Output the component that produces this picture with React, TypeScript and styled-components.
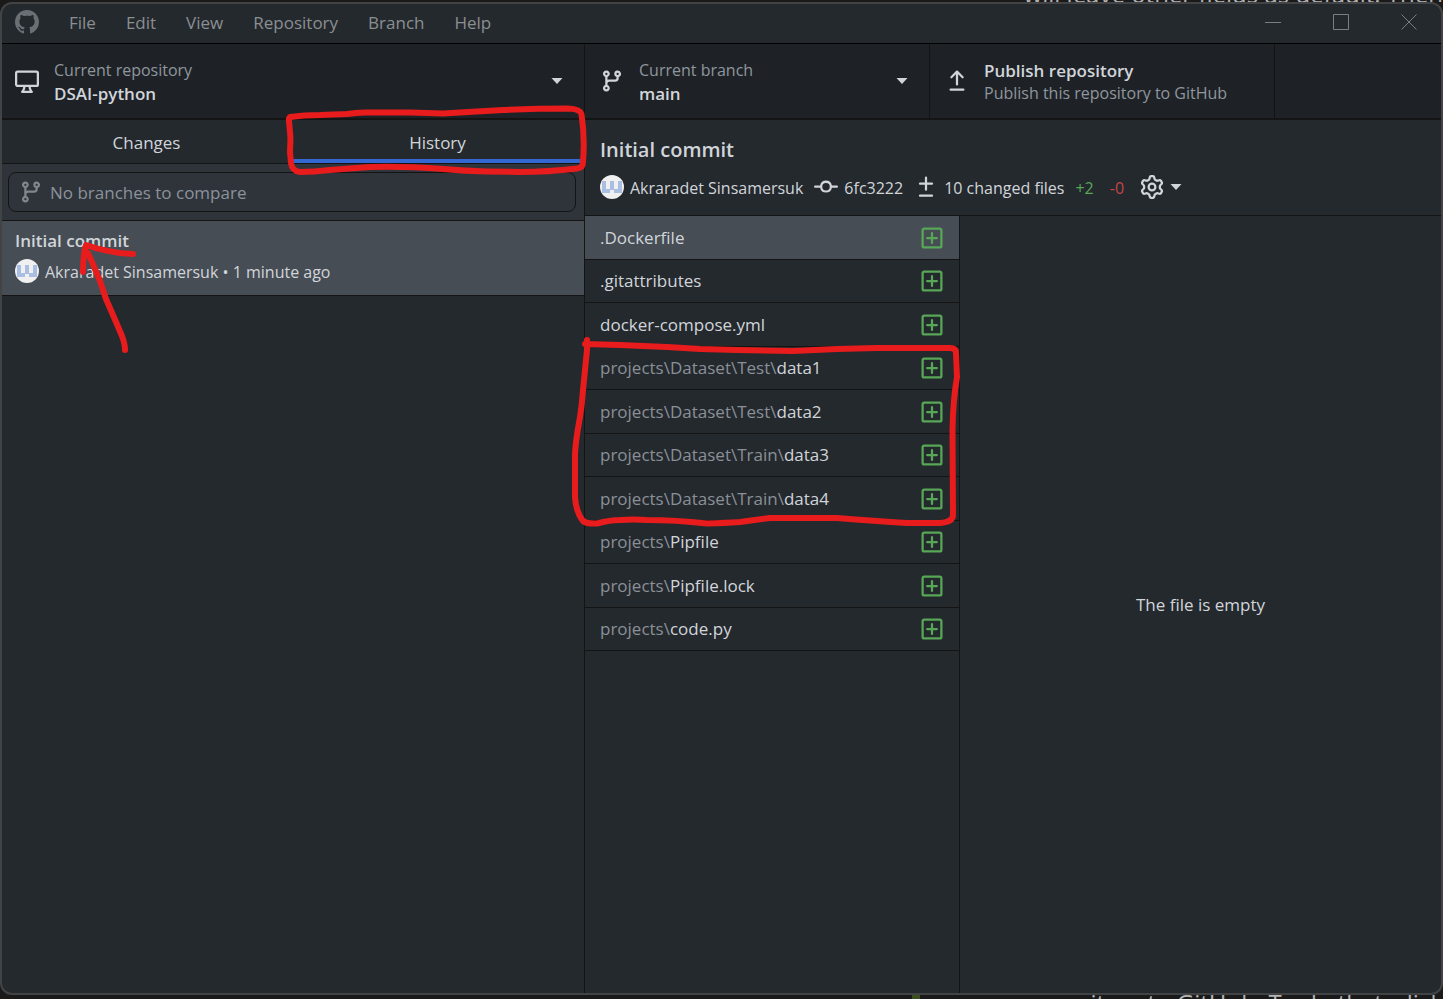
import React from 'react';
import styled, { createGlobalStyle, css } from 'styled-components';

const GlobalStyle = createGlobalStyle`
  *, *::before, *::after { box-sizing: border-box; }
  body {
    margin: 0;
    background: #1b1a1b;
    color: #d1d5da;
    font-family: "Open Sans", "Noto Sans", sans-serif;
    font-size: 17px;
    line-height: 24px;
  }
  button, input { font: inherit; color: inherit; }
  button { background: none; border: 0; padding: 0; text-align: left; cursor: default; }
  ul { list-style: none; margin: 0; padding: 0; }
  h1, h2, p { margin: 0; }
`;

const line = '#141414';

/* Octicon outlines on a 16-unit grid */
const icons = {
  github:
    'M8 0C3.58 0 0 3.58 0 8c0 3.54 2.29 6.53 5.47 7.59.4.07.55-.17.55-.38 0-.19-.01-.82-.01-1.49-2.01.37-2.53-.49-2.69-.94-.09-.23-.48-.94-.82-1.13-.28-.15-.68-.52-.01-.53.63-.01 1.08.58 1.23.82.72 1.21 1.87.87 2.33.66.07-.52.28-.87.51-1.07-1.78-.2-3.64-.89-3.64-3.95 0-.87.31-1.59.82-2.15-.08-.2-.36-1.02.08-2.12 0 0 .67-.21 2.2.82.64-.18 1.32-.27 2-.27.68 0 1.36.09 2 .27 1.53-1.04 2.2-.82 2.2-.82.44 1.1.16 1.92.08 2.12.51.56.82 1.27.82 2.15 0 3.07-1.87 3.75-3.65 3.95.29.25.54.73.54 1.48 0 1.07-.01 1.93-.01 2.2 0 .21.15.46.55.38A8.013 8.013 0 0016 8c0-4.42-3.58-8-8-8z',
  desktop:
    'M1.75 2.5h12.5a.25.25 0 01.25.25v7.5a.25.25 0 01-.25.25H1.75a.25.25 0 01-.25-.25v-7.5a.25.25 0 01.25-.25zM14.25 1H1.75A1.75 1.75 0 000 2.75v7.5C0 11.216.784 12 1.75 12h3.727c-.1 1.041-.52 1.872-1.292 2.757A.75.75 0 004.75 16h6.5a.75.75 0 00.565-1.243c-.772-.885-1.193-1.716-1.292-2.757h3.727A1.75 1.75 0 0016 10.25v-7.5A1.75 1.75 0 0014.25 1zM9.018 12H6.982a5.72 5.72 0 01-.765 2.5h3.566a5.72 5.72 0 01-.765-2.5z',
  branch:
    'M11.75 2.5a.75.75 0 100 1.5.75.75 0 000-1.5zm-2.25.75a2.25 2.25 0 113 2.122V6A2.5 2.5 0 0110 8.5H6a1 1 0 00-1 1v1.128a2.251 2.251 0 11-1.5 0V5.372a2.25 2.25 0 111.5 0v1.836A2.492 2.492 0 016 7h4a1 1 0 001-1v-.628A2.25 2.25 0 019.5 3.25zM4.25 12a.75.75 0 100 1.5.75.75 0 000-1.5zM3.5 3.25a.75.75 0 111.5 0 .75.75 0 01-1.5 0z',
  upload:
    'M8.53 1.22a.75.75 0 00-1.06 0L3.72 4.97a.75.75 0 001.06 1.06l2.47-2.47v6.69a.75.75 0 001.5 0V3.56l2.47 2.47a.75.75 0 101.06-1.06L8.53 1.22zM3.75 13a.75.75 0 000 1.5h8.5a.75.75 0 000-1.5h-8.5z',
  commit:
    'M10.5 7.75a2.5 2.5 0 11-5 0 2.5 2.5 0 015 0zm1.43.75a4.002 4.002 0 01-7.86 0H.75a.75.75 0 110-1.5h3.32a4.001 4.001 0 017.86 0h3.32a.75.75 0 110 1.5h-3.32z',
  diff: 'M8.75 1.75a.75.75 0 00-1.5 0V5H4a.75.75 0 000 1.5h3.25v3.25a.75.75 0 001.5 0V6.5H12A.75.75 0 0012 5H8.75V1.75zM4 13a.75.75 0 000 1.5h8a.75.75 0 100-1.5H4z',
  added:
    'M13.25 2.5H2.75a.25.25 0 00-.25.25v10.5c0 .138.112.25.25.25h10.5a.25.25 0 00.25-.25V2.75a.25.25 0 00-.25-.25zM2.75 1h10.5c.966 0 1.75.784 1.75 1.75v10.5A1.75 1.75 0 0113.25 15H2.75A1.75 1.75 0 011 13.25V2.75C1 1.784 1.784 1 2.75 1zM8 4a.75.75 0 01.75.75v2.5h2.5a.75.75 0 010 1.5h-2.5v2.5a.75.75 0 01-1.5 0v-2.5h-2.5a.75.75 0 010-1.5h2.5v-2.5A.75.75 0 018 4z',
  gear: 'M7.429 1.525a6.593 6.593 0 011.142 0c.036.003.108.036.137.146l.289 1.105c.147.56.55.967.997 1.189.174.086.341.183.501.29.417.278.97.423 1.53.27l1.102-.303c.11-.03.175.016.195.046.219.31.41.641.573.989.014.031.022.11-.059.19l-.815.806c-.411.406-.562.957-.53 1.456a4.588 4.588 0 010 .582c-.032.499.119 1.05.53 1.456l.815.806c.08.08.073.159.059.19a6.494 6.494 0 01-.573.99c-.02.029-.086.074-.195.045l-1.103-.303c-.559-.153-1.112-.008-1.529.27-.16.107-.327.204-.5.29-.449.222-.851.628-.998 1.189l-.289 1.105c-.029.11-.101.143-.137.146a6.613 6.613 0 01-1.142 0c-.036-.003-.108-.037-.137-.146l-.289-1.105c-.147-.56-.55-.967-.997-1.189a4.502 4.502 0 01-.501-.29c-.417-.278-.97-.423-1.53-.27l-1.102.303c-.11.03-.175-.016-.195-.046a6.492 6.492 0 01-.573-.989c-.014-.031-.022-.11.059-.19l.815-.806c.411-.406.562-.957.53-1.456a4.587 4.587 0 010-.582c.032-.499-.119-1.05-.53-1.456l-.815-.806c-.08-.08-.073-.159-.059-.19a6.44 6.44 0 01.573-.99c.02-.029.086-.075.195-.045l1.103.303c.559.153 1.112.008 1.529-.27.16-.107.327-.204.5-.29.449-.222.851-.628.998-1.189l.289-1.105c.029-.11.101-.143.137-.146zM8 0c-.236 0-.47.01-.701.03-.743.065-1.29.615-1.458 1.261l-.29 1.106c-.017.066-.078.158-.211.224a5.994 5.994 0 00-.668.386c-.123.082-.233.09-.3.071L3.27 2.776c-.644-.177-1.392.02-1.82.63a7.977 7.977 0 00-.704 1.217c-.315.675-.111 1.422.363 1.891l.815.806c.05.048.098.147.088.294a6.084 6.084 0 000 .772c.01.147-.038.246-.088.294l-.815.806c-.474.469-.678 1.216-.363 1.891.2.428.436.835.704 1.218.428.609 1.176.806 1.82.63l1.103-.303c.066-.019.176-.011.299.071.213.143.436.272.668.386.133.066.194.158.212.224l.289 1.106c.169.646.715 1.196 1.458 1.26a8.094 8.094 0 001.402 0c.743-.064 1.29-.614 1.458-1.26l.29-1.106c.017-.066.078-.158.211-.224a5.98 5.98 0 00.668-.386c.123-.082.233-.09.3-.071l1.102.302c.644.177 1.392-.02 1.82-.63.268-.382.505-.789.704-1.217.315-.675.111-1.422-.364-1.891l-.814-.806c-.05-.048-.098-.147-.088-.294a6.1 6.1 0 000-.772c-.01-.147.039-.246.088-.294l.814-.806c.475-.469.679-1.216.364-1.891a7.992 7.992 0 00-.704-1.218c-.428-.609-1.176-.806-1.82-.63l-1.103.303c-.066.019-.176.011-.299-.071a5.991 5.991 0 00-.668-.386c-.133-.066-.194-.158-.212-.224L10.16 1.29C9.99.645 9.444.095 8.701.031A8.094 8.094 0 008 0zm1.5 8a1.5 1.5 0 11-3 0 1.5 1.5 0 013 0zM11 8a3 3 0 11-6 0 3 3 0 016 0z',
};

const IconSvg = styled.svg`
  flex: none;
  display: block;
  fill: currentColor;
`;

function Icon({ name }: { name: keyof typeof icons }) {
  return (
    <IconSvg width="24" height="24" viewBox="0 0 16 16" aria-hidden="true">
      <path fillRule="evenodd" d={icons[name]} />
    </IconSvg>
  );
}

function Caret() {
  return (
    <IconSvg width="12" height="6" viewBox="0 0 12 6" aria-hidden="true">
      <path d="M.5 0h11L6 6z" />
    </IconSvg>
  );
}

function Avatar() {
  return (
    <IconSvg width="24" height="24" viewBox="0 0 24 24" aria-hidden="true">
      <circle cx="12" cy="12" r="12" fill="#f0f0f0" />
      <path
        fill="#aabde3"
        d="M2 6h4v8h4V6h4v8h4V6h4v12h-8v-3h-4v3H2z"
      />
    </IconSvg>
  );
}

/* Desktop behind the window */
const Desktop = styled.div`
  position: relative;
  min-height: 100vh;
  display: flex;
  flex-direction: column;
  overflow: hidden;
`;

const BackdropStrip = styled.div<{ $edge: 'top' | 'bottom' }>`
  flex: none;
  display: flex;
  justify-content: flex-end;
  align-items: ${(p) => (p.$edge === 'top' ? 'flex-end' : 'flex-start')};
  height: ${(p) => (p.$edge === 'top' ? 2 : 4)}px;
  overflow: hidden;
  color: #b4b4b4;
  font-size: 24px;
  line-height: 16px;
  white-space: nowrap;
`;

const BackdropMark = styled.span`
  width: 8px;
  height: 4px;
  margin-right: 107px;
  background: #3a4f1d;
`;

const AppWindow = styled.div`
  flex: 1;
  display: flex;
  flex-direction: column;
  border: 2px solid #424344;
  border-radius: 12px;
  overflow: hidden;
  background: #24292e;
`;

const TitleBar = styled.header`
  flex: none;
  display: flex;
  align-items: center;
  height: 40px;
  padding-left: 13px;
  border-bottom: 1px solid #000;
  color: #8b8f92;
`;

const Logo = styled.span`
  color: #6a6f75;
  margin: 0 15px 4px 0;
`;

const Menu = styled.nav`
  display: flex;
  flex: 1;
  padding-bottom: 2px;
`;

const MenuItem = styled.button`
  padding: 0 15px;
`;

const WindowControls = styled.div`
  display: flex;
  gap: 4px;
  padding-bottom: 4px;
`;

const WindowButton = styled.button`
  display: flex;
  align-items: center;
  justify-content: center;
  width: 64px;
  height: 34px;
  svg { fill: none; stroke: #7b7e80; }
`;

const Toolbar = styled.div`
  flex: none;
  display: flex;
  height: 76px;
  background: #1e2226;
  border-bottom: 2px solid ${line};
`;

const ToolbarButton = styled.button<{ $width: number }>`
  display: flex;
  align-items: center;
  gap: 15px;
  width: ${(p) => p.$width}px;
  padding: 0 21px 0 ${(p) => (p.$width > 400 ? 13 : 15)}px;
  border-right: 1px solid ${line};
`;

const ToolbarText = styled.span`
  flex: 1;
  display: flex;
  flex-direction: column;
  padding-top: 2px;
  line-height: 23px;
  white-space: nowrap;
`;

const Muted = styled.span`
  color: #8f969e;
  font-size: 16px;
`;

const Strong = styled.strong`
  font-size: 17px;
  font-weight: 600;
`;

const Body = styled.main`
  flex: 1;
  display: flex;
`;

const Sidebar = styled.aside`
  flex: none;
  width: 583px;
  border-right: 1px solid ${line};
`;

const Tabs = styled.div`
  display: flex;
  height: 44px;
  border-bottom: 1px solid ${line};
`;

const Tab = styled.button<{ $active?: boolean }>`
  flex: 1;
  padding: 6px 2px 0 0;
  border-bottom: 4px solid transparent;
  text-align: center;
  ${(p) => p.$active && css`border-bottom-color: #3367d1;`}
`;

const Compare = styled.div`
  padding: 8px 8px 8px 6px;
  background: #2f343b;
  border-bottom: 1px solid ${line};
`;

const CompareBox = styled.label`
  display: flex;
  align-items: center;
  gap: 7px;
  height: 40px;
  padding: 0 10px;
  border: 1px solid ${line};
  border-radius: 8px;
  color: #81868c;
`;

const CompareInput = styled.input`
  flex: 1;
  min-width: 0;
  padding: 2px 0 0;
  border: 0;
  outline: 0;
  background: none;
  &::placeholder { color: #8b929a; opacity: 1; }
`;

const CommitItem = styled.button`
  display: flex;
  flex-direction: column;
  gap: 5px;
  width: 100%;
  height: 75px;
  padding: 8px 13px;
  background: #464d55;
  border-bottom: 1px solid ${line};
`;

const Meta = styled.span`
  display: flex;
  align-items: center;
  gap: 6px;
  font-size: 16px;
  white-space: nowrap;
`;

const MetaText = styled.span`
  padding-top: 2px;
`;

const Detail = styled.section`
  flex: 1;
  min-width: 0;
  display: flex;
  flex-direction: column;
`;

const DetailHeader = styled.header`
  flex: none;
  height: 96px;
  padding: 15px 15px 0;
  border-bottom: 1px solid ${line};
`;

const DetailTitle = styled.h1`
  font-size: 20px;
  line-height: 30px;
  font-weight: 600;
`;

const DetailMeta = styled.div`
  display: flex;
  align-items: center;
  gap: 11px;
  height: 24px;
  margin-top: 10px;
`;

const Totals = styled.div`
  display: flex;
  align-items: center;
  gap: 16px;
`;

const Count = styled(MetaText)<{ $color: string }>`
  color: ${(p) => p.$color};
`;

const OptionsButton = styled.button`
  display: flex;
  align-items: center;
  gap: 6px;
`;

const Panes = styled.div`
  flex: 1;
  display: flex;
`;

const FileList = styled.ul`
  flex: none;
  width: 375px;
  border-right: 1px solid ${line};
`;

const FileItem = styled.li`
  height: 44px;
  border-bottom: 1px solid ${line};
  &:nth-child(even) { height: 43px; }
`;

const FileButton = styled.button<{ $selected: boolean }>`
  display: flex;
  align-items: center;
  justify-content: space-between;
  width: 100%;
  height: 100%;
  padding: 0 15px;
  background: ${(p) => (p.$selected ? '#464d55' : 'none')};
`;

const Folder = styled.span`
  color: #8a9097;
`;

const Added = styled.span`
  color: #57a756;
`;

const DiffPane = styled.div`
  flex: 1;
  display: flex;
  align-items: center;
  justify-content: center;
`;

/* Hand-drawn marks lying over the window */
const Marks = styled.svg`
  position: absolute;
  top: 0;
  left: 0;
  pointer-events: none;
  fill: none;
  stroke: #e81c1c;
  stroke-width: 6;
  stroke-linecap: round;
  stroke-linejoin: round;
`;

const menu = ['File', 'Edit', 'View', 'Repository', 'Branch', 'Help'];

const files = [
  { folder: '', name: '.Dockerfile' },
  { folder: '', name: '.gitattributes' },
  { folder: '', name: 'docker-compose.yml' },
  { folder: 'projects\\Dataset\\Test\\', name: 'data1' },
  { folder: 'projects\\Dataset\\Test\\', name: 'data2' },
  { folder: 'projects\\Dataset\\Train\\', name: 'data3' },
  { folder: 'projects\\Dataset\\Train\\', name: 'data4' },
  { folder: 'projects\\', name: 'Pipfile' },
  { folder: 'projects\\', name: 'Pipfile.lock' },
  { folder: 'projects\\', name: 'code.py' },
];

export default function App() {
  return (
    <Desktop>
      <GlobalStyle />
      <BackdropStrip $edge="top">will leave other fields as default. Then</BackdropStrip>
      <AppWindow>
        <TitleBar>
          <Logo><Icon name="github" /></Logo>
          <Menu>
            {menu.map((label) => <MenuItem key={label}>{label}</MenuItem>)}
          </Menu>
          <WindowControls>
            <WindowButton aria-label="Minimize">
              <svg width="16" height="16"><path d="M0 8.5h16" /></svg>
            </WindowButton>
            <WindowButton aria-label="Maximize">
              <svg width="16" height="16"><path d="M.5.5h15v15H.5z" /></svg>
            </WindowButton>
            <WindowButton aria-label="Close">
              <svg width="16" height="16"><path d="M.5.5l15 15M15.5.5l-15 15" /></svg>
            </WindowButton>
          </WindowControls>
        </TitleBar>

        <Toolbar>
          <ToolbarButton $width={583}>
            <Icon name="desktop" />
            <ToolbarText><Muted>Current repository</Muted><Strong>DSAI-python</Strong></ToolbarText>
            <Caret />
          </ToolbarButton>
          <ToolbarButton $width={345}>
            <Icon name="branch" />
            <ToolbarText><Muted>Current branch</Muted><Strong>main</Strong></ToolbarText>
            <Caret />
          </ToolbarButton>
          <ToolbarButton $width={345}>
            <Icon name="upload" />
            <ToolbarText><Strong>Publish repository</Strong><Muted>Publish this repository to GitHub</Muted></ToolbarText>
          </ToolbarButton>
        </Toolbar>

        <Body>
          <Sidebar>
            <Tabs>
              <Tab>Changes</Tab>
              <Tab $active>History</Tab>
            </Tabs>
            <Compare>
              <CompareBox>
                <Icon name="branch" />
                <CompareInput aria-label="Branch to compare" placeholder="No branches to compare" />
              </CompareBox>
            </Compare>
            <CommitItem>
              <Strong>Initial commit</Strong>
              <Meta><Avatar /><MetaText>Akraradet Sinsamersuk • 1 minute ago</MetaText></Meta>
            </CommitItem>
          </Sidebar>

          <Detail>
            <DetailHeader>
              <DetailTitle>Initial commit</DetailTitle>
              <DetailMeta>
                <Meta><Avatar /><MetaText>Akraradet Sinsamersuk</MetaText></Meta>
                <Meta><Icon name="commit" /><MetaText>6fc3222</MetaText></Meta>
                <Meta><Icon name="diff" /><MetaText>10 changed files</MetaText></Meta>
                <Totals>
                  <Meta><Count $color="#57a756">+2</Count></Meta>
                  <Meta><Count $color="#c24545">-0</Count></Meta>
                  <OptionsButton aria-label="Diff options"><Icon name="gear" /><Caret /></OptionsButton>
                </Totals>
              </DetailMeta>
            </DetailHeader>
            <Panes>
              <FileList>
                {files.map((file, i) => (
                  <FileItem key={file.folder + file.name}>
                    <FileButton $selected={i === 0}>
                      <span><Folder>{file.folder}</Folder>{file.name}</span>
                      <Added><Icon name="added" /></Added>
                    </FileButton>
                  </FileItem>
                ))}
              </FileList>
              <DiffPane><p>The file is empty</p></DiffPane>
            </Panes>
          </Detail>
        </Body>
      </AppWindow>
      <BackdropStrip $edge="bottom">
        <BackdropMark />
        repository to GitHub. To do that, click
      </BackdropStrip>

      <Marks width="1000" height="560" viewBox="0 0 1000 560" aria-hidden="true">
        <path d="M290 117Q304 115 320 115L347 114Q358 112 370 112.500L410 112.500L443 113.500L477 111.500L503 110Q537 108.500 568 108.500Q580 109 581.500 114Q585 138 583 162Q583 168 577 168.500Q548 172 520 172L487 171.500Q465 171 443 169Q403 166 370 167L330 170Q314 172 300 172Q292 171 291 163L290 152L290.500 138L289 121Q288 117 292 117" />
        <path d="M587 340L587 350L583 390Q582 405 580 417Q575 444 575 457L575 497Q576 512 583 521Q587 524 597 523.500Q610 520 620 520Q634 519 647 520Q675 520 707 523.500Q726 523 740 522L770 518L837 518Q875 521 907 523L940 523Q953 522 953 515L952.500 430Q953 400 957 377L956 353Q956 348 950 348L877 348L837 349Q815 350 793 351L737 350L700 349L667 347L620 345L585 344" />
        <path d="M125 350Q125 344 122 336L113 315L106 299L100 281Q93 264 88 253M83 272Q83 255 86 245Q109 253 133 254" />
      </Marks>
    </Desktop>
  );
}
